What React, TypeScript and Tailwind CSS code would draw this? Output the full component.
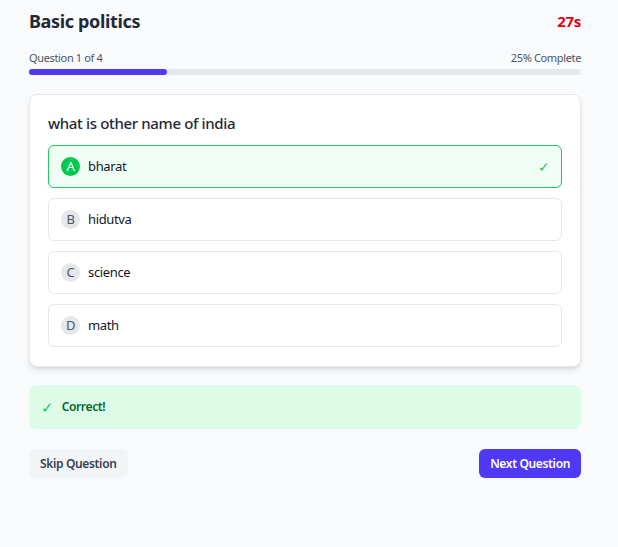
import React, { useState } from 'react';

interface Option {
  key: string;
  label: string;
}

const options: Option[] = [
  { key: 'A', label: 'bharat' },
  { key: 'B', label: 'hidutva' },
  { key: 'C', label: 'science' },
  { key: 'D', label: 'math' },
];

const OptionRow: React.FC<{ option: Option; selected: boolean; correct: boolean }> = ({ option, selected, correct }) => {
  const isRight = selected && correct;
  return (
    <div
      className={`flex h-[43px] items-center rounded-md border px-3 ${
        isRight ? 'border-[#22c55e] bg-[#f0fdf4]' : 'border-[#e5e7eb] bg-white'
      }`}
    >
      <span
        className={`flex h-[19px] w-[19px] items-center justify-center rounded-full text-[13px] leading-none ${
          isRight ? 'bg-[#00c950] text-white' : 'bg-[#e5e7eb] text-[#4b5563]'
        }`}
      >
        {option.key}
      </span>
      <span className="ml-[8px] text-[13px] text-[#111827]">{option.label}</span>
      {isRight && <span className="ml-auto mr-[-1px] text-[14px] text-[#22c55e]">✓</span>}
    </div>
  );
};

export default function App() {
  const [selected] = useState('A');
  const progress = 25;

  return (
    <div className="min-h-[547px] w-full bg-[#f9fafb] font-['Noto_Sans',sans-serif] tracking-[-0.35px] text-[#1f2937]">
      <div className="ml-[29px] w-[552px] pt-[8px]">
        <div className="flex h-[26px] items-center justify-between">
          <h1 className="text-[18px] font-bold leading-none text-[#1f2937]">Basic politics</h1>
          <span className="text-[15px] font-bold text-[#e7000b]">27s</span>
        </div>

        <div className="mt-[17px] flex justify-between text-[11px] leading-[14px] text-[#4b5563]">
          <span>Question 1 of 4</span>
          <span>{progress}% Complete</span>
        </div>
        <div className="mt-[4px] h-[6px] w-full rounded-full bg-[#e5e7eb]">
          <div className="h-full rounded-full bg-[#4f39f6]" style={{ width: `${progress}%` }} />
        </div>

        <div className="mt-[19px] rounded-lg border border-[#e5e7eb] bg-white px-[18px] pb-[19px] pt-[16px] shadow-md">
          <h2 className="mb-[10px] text-[15px] font-medium leading-[24px] text-[#1f2937]">what is other name of india</h2>
          <div className="flex flex-col gap-[10px]">
            {options.map((o) => (
              <OptionRow key={o.key} option={o} selected={selected === o.key} correct={o.key === 'A'} />
            ))}
          </div>
        </div>

        <div className="mt-[18px] flex h-[44px] items-center rounded-lg bg-[#dcfce7] px-[12px]">
          <span className="text-[15px] text-[#22c55e]">✓</span>
          <span className="ml-[8px] text-[12px] font-semibold text-[#016630]">Correct!</span>
        </div>

        <div className="mt-[20px] flex items-center justify-between">
          <button className="h-[29px] rounded-md bg-[#f3f4f6] px-[11px] text-[12px] font-semibold text-[#364153]">
            Skip Question
          </button>
          <button className="h-[29px] rounded-md bg-[#4f39f6] px-[11px] text-[12px] font-semibold text-white">
            Next Question
          </button>
        </div>
      </div>
    </div>
  );
}
